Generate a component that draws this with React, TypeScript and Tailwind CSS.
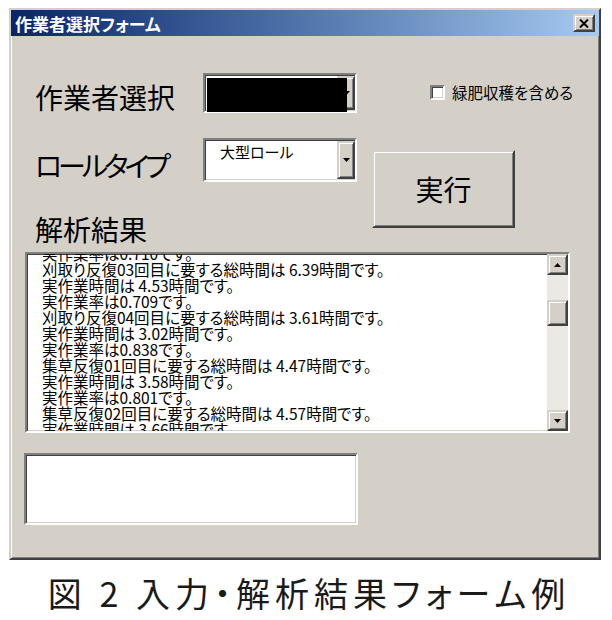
const jp = "font-['Noto_Sans_CJK_JP',sans-serif]";

// classic Win2000 3D edges
const sunken =
  "border-2 border-t-[#808080] border-l-[#808080] border-b-white border-r-white shadow-[inset_1px_1px_0_#404040,inset_-1px_-1px_0_#d4d0c8]";
const raised =
  "border-2 border-t-[#d4d0c8] border-l-[#d4d0c8] border-b-[#404040] border-r-[#404040] shadow-[inset_1px_1px_0_#ffffff,inset_-1px_-1px_0_#808080]";

const logLines = [
  "実作業率は0.710です。",
  "刈取り反復03回目に要する総時間は 6.39時間です。",
  "実作業時間は 4.53時間です。",
  "実作業率は0.709です。",
  "刈取り反復04回目に要する総時間は 3.61時間です。",
  "実作業時間は 3.02時間です。",
  "実作業率は0.838です。",
  "集草反復01回目に要する総時間は 4.47時間です。",
  "実作業時間は 3.58時間です。",
  "実作業率は0.801です。",
  "集草反復02回目に要する総時間は 4.57時間です。",
  "実作業時間は 3.66時間です。",
];

function Arrow({ up }: { up?: boolean }) {
  return (
    <svg width="7" height="4" viewBox="0 0 7 4">
      <path d={up ? "M3.5 0L7 4H0z" : "M0 0h7L3.5 4z"} fill="#000" />
    </svg>
  );
}

function Combo({ value, h, redacted }: { value?: string; h: string; redacted?: boolean }) {
  return (
    <div className={`relative flex w-[154px] bg-white ${sunken} ${h}`}>
      <div className="flex-1 pl-[15px] pt-[4px] text-[15px] leading-[16px]">{value}</div>
      <div className={`my-[1px] flex w-[18px] items-center justify-center bg-[#d4d0c8] ${raised}`}>
        <Arrow />
      </div>
      {redacted && <div className="absolute left-[2px] top-[3px] h-[34px] w-[140px] bg-black" />}
    </div>
  );
}

function ScrollButton({ up }: { up?: boolean }) {
  return (
    <div className={`flex h-[21px] w-[21px] items-center justify-center bg-[#d4d0c8] ${raised}`}>
      <Arrow up={up} />
    </div>
  );
}

export default function App() {
  return (
    <div className={`min-h-[620px] w-[612px] bg-white pl-[9px] pt-[8px] text-black ${jp} [font-feature-settings:'palt']`}>
      <div className={`flex h-[552px] w-[592px] flex-col bg-[#d4d0c8] ${raised}`}>
        {/* title bar */}
        <div className="flex h-[26px] items-center justify-between bg-linear-to-r from-[#0a246a] to-[#a6caf0] pl-[4px] pr-[4px]">
          <span className="text-[17px] font-bold leading-none text-white">作業者選択フォーム</span>
          <div className={`flex h-[18px] w-[22px] items-center justify-center bg-[#d4d0c8] ${raised}`}>
            <svg width="10" height="9" viewBox="0 0 10 9">
              <path d="M1 0.5L9 8.5M9 0.5L1 8.5" stroke="#000" strokeWidth="2" />
            </svg>
          </div>
        </div>

        <div className="h-[522px]">
          <div className="ml-[24px] mt-[37px] flex items-start">
            <span className="mt-[10px] w-[168px] text-[28px] leading-none">作業者選択</span>
            <Combo h="h-[40px]" redacted />
            <label className="ml-[73px] mt-[12px] flex items-center gap-[7px]">
              <span className={`h-[15px] w-[15px] bg-white ${sunken}`} />
              <span className="text-[15.5px] leading-none">緑肥収穫を含める</span>
            </label>
          </div>

          <div className="ml-[24px] mt-[25px] flex items-start">
            <div className="flex flex-col">
              <div className="flex items-start">
                <span className="mt-[13px] w-[168px] text-[28px] leading-none tracking-[-4px]">ロールタイプ</span>
                <Combo h="h-[44px]" value="大型ロール" />
              </div>
              <span className="mt-[33px] text-[28px] leading-none">解析結果</span>
            </div>
            <button className={`ml-[15px] mt-[12px] h-[78px] w-[143px] bg-[#d4d0c8] text-[28px] leading-none ${raised}`}>
              実行
            </button>
          </div>

          <div className={`ml-[14px] mt-[9px] flex h-[181px] w-[545px] bg-white ${sunken}`}>
            <div className="flex-1 overflow-hidden pl-[15px]">
              <div className="-mt-[9px] text-[15.5px] leading-[16px]">
                {logLines.map((line, i) => (
                  <div key={i} className="whitespace-nowrap">
                    {line}
                  </div>
                ))}
              </div>
            </div>
            <div className="flex w-[21px] flex-col bg-[#ebe9e4]">
              <ScrollButton up />
              <div className="flex-1">
                <div className={`mt-[25px] h-[26px] w-[21px] bg-[#d4d0c8] ${raised}`} />
              </div>
              <ScrollButton />
            </div>
          </div>

          <div className={`ml-[13px] mt-[20px] h-[72px] w-[334px] bg-white ${sunken}`} />
        </div>
      </div>

      <p className="mt-[16px] w-[600px] text-center text-[34px] leading-none tracking-[5px] text-[#1a1a1a]">
        図 2 入力・解析結果フォーム例
      </p>
    </div>
  );
}
